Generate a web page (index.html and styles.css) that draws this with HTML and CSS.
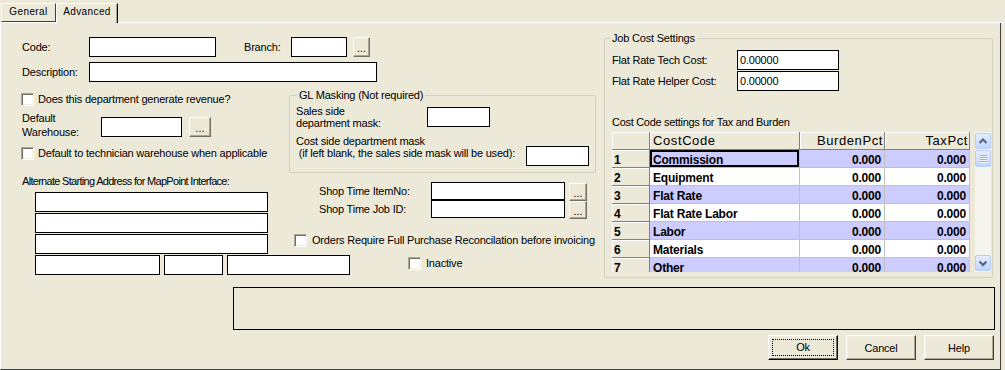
FILE: index.html
```html
<!DOCTYPE html>
<html lang="en">
<head>
    <meta charset="UTF-8">
    <meta name="viewport" content="width=device-width, initial-scale=1.0">
    <title>Department - Advanced</title>
    <link rel="stylesheet" href="styles.css">
</head>
<body>
<div class="window">
    <div class="tabs">
        <div class="tab tab-general">General</div>
        <div class="tab tab-advanced">Advanced</div>
    </div>

    <div class="panel">
        <div class="main">
            <div class="left">
                <div class="row">
                    <label class="lbl lbl-first">Code:</label>
                    <input type="text" class="txt code-input">
                    <label class="lbl branch-lbl">Branch:</label>
                    <input type="text" class="txt branch-input">
                    <button class="dots">...</button>
                </div>
                <div class="row row-desc">
                    <label class="lbl lbl-first">Description:</label>
                    <input type="text" class="txt desc-input">
                </div>

                <div class="cols">
                    <div class="col-a">
                        <label class="check check-revenue"><span class="box"></span>Does this department generate revenue?</label>
                        <div class="warehouse">
                            <label class="wh-lbl">Default<br>Warehouse:</label>
                            <input type="text" class="txt wh-input">
                            <button class="dots wh-dots">...</button>
                        </div>
                        <label class="check check-tech"><span class="box"></span>Default to technician warehouse when applicable</label>
                        <div class="alt-lbl">Alternate Starting Address for MapPoint Interface:</div>
                        <div class="address">
                            <input type="text" class="txt addr">
                            <input type="text" class="txt addr">
                            <input type="text" class="txt addr">
                            <div class="addr-row">
                                <input type="text" class="txt city">
                                <input type="text" class="txt state">
                                <input type="text" class="txt zip">
                            </div>
                        </div>
                    </div>

                    <div class="col-b">
                        <fieldset class="group gl">
                            <legend>GL Masking (Not required)</legend>
                            <div class="gl-row">
                                <label class="gl-lbl sales-lbl">Sales side<br>department mask:</label>
                                <input type="text" class="txt mask sales-mask">
                            </div>
                            <div class="gl-row cost-row">
                                <label class="gl-lbl cost-lbl">Cost side department mask<br>&nbsp;(if left blank, the sales side mask will be used):</label>
                                <input type="text" class="txt mask cost-mask">
                            </div>
                        </fieldset>

                        <div class="shop">
                            <div class="shop-row">
                                <label class="shop-lbl">Shop Time ItemNo:</label>
                                <input type="text" class="txt shop-input">
                                <button class="dots shop-dots">...</button>
                            </div>
                            <div class="shop-row">
                                <label class="shop-lbl">Shop Time Job ID:</label>
                                <input type="text" class="txt shop-input">
                                <button class="dots shop-dots">...</button>
                            </div>
                        </div>

                        <label class="check check-orders"><span class="box"></span>Orders Require Full Purchase Reconcilation before invoicing</label>
                        <label class="check check-inactive"><span class="box"></span>Inactive</label>
                    </div>
                </div>
            </div>

            <fieldset class="group jobcost">
                <legend>Job Cost Settings</legend>
                <div class="rate-row">
                    <label class="rate-lbl">Flat Rate Tech Cost:</label>
                    <input type="text" class="txt rate-input" value="0.00000">
                </div>
                <div class="rate-row">
                    <label class="rate-lbl">Flat Rate Helper Cost:</label>
                    <input type="text" class="txt rate-input" value="0.00000">
                </div>
                <div class="cc-lbl">Cost Code settings for Tax and Burden</div>

                <div class="grid">
                    <div class="cells">
                        <div class="hc"></div>
                        <div class="hc">CostCode</div>
                        <div class="hc num">BurdenPct</div>
                        <div class="hc num">TaxPct</div>

                        <div class="rh">1</div>
                        <div class="c lav focus">Commission</div>
                        <div class="c lav num">0.000</div>
                        <div class="c lav num">0.000</div>

                        <div class="rh">2</div>
                        <div class="c">Equipment</div>
                        <div class="c num">0.000</div>
                        <div class="c num">0.000</div>

                        <div class="rh">3</div>
                        <div class="c lav">Flat Rate</div>
                        <div class="c lav num">0.000</div>
                        <div class="c lav num">0.000</div>

                        <div class="rh">4</div>
                        <div class="c">Flat Rate Labor</div>
                        <div class="c num">0.000</div>
                        <div class="c num">0.000</div>

                        <div class="rh">5</div>
                        <div class="c lav">Labor</div>
                        <div class="c lav num">0.000</div>
                        <div class="c lav num">0.000</div>

                        <div class="rh">6</div>
                        <div class="c">Materials</div>
                        <div class="c num">0.000</div>
                        <div class="c num">0.000</div>

                        <div class="rh">7</div>
                        <div class="c lav">Other</div>
                        <div class="c lav num">0.000</div>
                        <div class="c lav num">0.000</div>
                    </div>

                    <div class="vscroll">
                        <div class="sb-btn">
                            <svg width="14" height="14" viewBox="0 0 14 14"><path d="M3.5 9 L7 5.5 L10.5 9" fill="none" stroke="#4D6185" stroke-width="2"/></svg>
                        </div>
                        <div class="sb-thumb">
                            <span></span><span></span><span></span><span></span>
                        </div>
                        <div class="sb-track"></div>
                        <div class="sb-btn">
                            <svg width="14" height="14" viewBox="0 0 14 14"><path d="M3.5 5.5 L7 9 L10.5 5.5" fill="none" stroke="#4D6185" stroke-width="2"/></svg>
                        </div>
                    </div>
                </div>
            </fieldset>
        </div>

        <div class="status"></div>

        <div class="actions">
            <button class="btn btn-default"><span class="focus-rect">Ok</span></button>
            <button class="btn">Cancel</button>
            <button class="btn">Help</button>
        </div>
    </div>
</div>
</body>
</html>
```

FILE: styles.css
```css
* {
    box-sizing: border-box;
}
body {
    margin: 0;
    background: #ece9d8;
}
.window {
    width: 1005px;
    height: 370px;
    overflow: hidden;
    background: #ece9d8;
    font-family: "Liberation Sans", Arial, sans-serif;
    font-size: 11px;
    letter-spacing: -0.2px;
    color: #000;
}

/* tabs */
.tabs {
    display: flex;
    height: 23px;
    box-shadow: inset 0 -1px #fff;
}
.tab {
    margin-top: 3px;
    text-align: center;
    font-size: 10px;
    letter-spacing: 0.4px;
    line-height: 16px;
}
.tab-general {
    width: 55px;
    height: 19px;
    margin-left: 1px;
    border-top: 1px solid #fff;
    border-left: 1px solid #fff;
    border-right: 1px solid #404040;
    border-bottom: 1px solid #404040;
}
.tab-advanced {
    width: 62px;
    height: 20px;
    background: #ece9d8;
    border-top: 1px solid #fff;
    border-left: 1px solid #fff;
    border-right: 1px solid #000;
    box-shadow: inset -1px 0 #aca899;
}

.panel {
    width: 1001px;
    height: 347px;
    border-left: 1px solid #fff;
    border-right: 1px solid #404040;
    border-bottom: 1px solid #404040;
}
.main {
    display: flex;
    align-items: flex-start;
}
.left {
    width: 603px;
    flex: none;
    padding: 14px 0 0 21px;
}

/* common controls */
label {
    white-space: nowrap;
}
.txt {
    height: 20px;
    margin: 0;
    padding: 0 2px;
    border: 1px solid #000;
    background: #fff;
    font: inherit;
    letter-spacing: inherit;
    flex: none;
    outline: none;
}
.dots {
    width: 17px;
    height: 20px;
    margin: 0 0 0 6px;
    padding: 0 0 2px;
    flex: none;
    background: #ece9d8;
    border: 1px solid;
    border-color: #fff #716f64 #716f64 #fff;
    box-shadow: inset -1px -1px #aca899;
    font: 11px "Liberation Sans", Arial, sans-serif;
    line-height: 20px;
    letter-spacing: 0;
    color: #000;
}
.check {
    display: flex;
    align-items: center;
    height: 13px;
    line-height: 13px;
}
.box {
    width: 13px;
    height: 13px;
    margin-right: 4px;
    flex: none;
    background: #fff;
    border: 1px solid;
    border-color: #aca899 #fff #fff #aca899;
    box-shadow: inset 1px 1px #716f64, inset -1px -1px #f1efe2;
}

.row {
    display: flex;
    align-items: flex-start;
}
.lbl {
    line-height: 20px;
}
.lbl-first {
    width: 67px;
}
.code-input {
    width: 127px;
}
.branch-lbl {
    width: 47px;
    margin-left: 28px;
}
.branch-input {
    width: 56px;
}
.row-desc {
    margin-top: 5px;
}
.desc-input {
    width: 288px;
}

.cols {
    display: flex;
    margin-top: 6px;
}
.col-a {
    width: 266px;
    flex: none;
}
.col-b {
    width: 310px;
    flex: none;
}

.check-revenue {
    margin: 5px 0 0 -1px;
}
.warehouse {
    display: flex;
    align-items: flex-start;
    margin-top: 5px;
}
.wh-lbl {
    width: 79px;
    line-height: 14px;
}
.wh-input {
    width: 81px;
    margin-top: 6px;
}
.wh-dots {
    width: 22px;
    margin: 6px 0 0 7px;
}
.check-tech {
    margin: 8px 0 0 -1px;
}
.alt-lbl {
    margin-top: 14px;
    line-height: 14px;
    letter-spacing: -0.7px;
}
.address {
    display: flex;
    flex-direction: column;
    gap: 1px;
    margin: 4px 0 0 13px;
}
.addr {
    width: 233px;
}
.addr-row {
    display: flex;
    gap: 4px;
}
.city {
    width: 125px;
}
.state {
    width: 59px;
}
.zip {
    width: 123px;
}

/* group boxes */
.group {
    margin: 0;
    min-width: 0;
    border: 1px solid #d0d0bf;
    border-radius: 2px;
}
.group legend {
    padding: 0 2px;
    line-height: 14px;
}
.gl {
    width: 307px;
    margin-left: 1px;
    padding: 3px 6px 6px;
}
.gl legend {
    margin-left: 1px;
}
.gl-row {
    display: flex;
    align-items: flex-start;
}
.gl-lbl {
    line-height: 12px;
}
.sales-lbl {
    width: 131px;
}
.cost-lbl {
    width: 230px;
}
.mask {
    width: 63px;
}
.sales-mask {
    margin-top: 2px;
}
.cost-row {
    margin-top: 6px;
}
.cost-mask {
    margin-top: 11px;
}

.shop {
    margin: 9px 0 0 31px;
}
.shop-row {
    display: flex;
    align-items: center;
    height: 18px;
}
.shop-lbl {
    width: 112px;
}
.shop-input {
    width: 134px;
    height: 18px;
}
.shop-dots {
    width: 18px;
    height: 18px;
    margin: 1px 0 0 4px;
    align-self: flex-start;
    line-height: 18px;
}
.check-orders {
    margin: 16px 0 0 6px;
}
.check-orders .box {
    margin-right: 5px;
}
.check-inactive {
    margin: 10px 0 0 120px;
}
.check-inactive .box {
    margin-right: 5px;
}

/* job cost */
.jobcost {
    width: 389px;
    flex: none;
    margin-top: 8px;
    padding: 5px 0 5px 7px;
}
.jobcost legend {
    margin-left: -2px;
}
.rate-row {
    display: flex;
    align-items: center;
    height: 20px;
}
.rate-row + .rate-row {
    margin-top: 1px;
}
.rate-lbl {
    width: 125px;
}
.rate-input {
    width: 102px;
}
.cc-lbl {
    margin-top: 24px;
    line-height: 14px;
    letter-spacing: -0.3px;
}

.grid {
    display: flex;
    height: 140px;
    margin-top: 3px;
}
.cells {
    width: 358px;
    height: 140px;
    overflow: hidden;
    display: grid;
    grid-template-columns: 38px 150px 85px 85px;
    grid-auto-rows: 18px;
    align-content: start;
}
.hc {
    padding: 2px 2px 0 3px;
    background: #ece9d8;
    border-right: 1px solid #808080;
    border-bottom: 1px solid #808080;
    box-shadow: inset 1px 1px #fff;
    font-size: 13px;
    line-height: 13px;
    letter-spacing: 0.6px;
}
.hc.num {
    padding-right: 1px;
}
.rh {
    padding: 4px 0 0 2px;
    background: #ece9d8;
    border-right: 1px solid #808080;
    border-bottom: 1px solid #808080;
    box-shadow: inset 1px 1px #fff;
    font-size: 12px;
    font-weight: bold;
    line-height: 13px;
}
.c {
    padding: 4px 3px 0;
    background: #fff;
    border-right: 1px solid #c0c0c0;
    border-bottom: 1px solid #c0c0c0;
    font-size: 12px;
    font-weight: bold;
    line-height: 13px;
    letter-spacing: -0.2px;
    white-space: nowrap;
    overflow: hidden;
}
.c.lav {
    background: #ccccff;
}
.c.focus {
    box-shadow: inset 0 0 0 2px #000;
}
.num {
    text-align: right;
}

.vscroll {
    width: 16px;
    height: 140px;
    margin-left: 5px;
    display: flex;
    flex-direction: column;
    background: #f5f4ef;
    padding: 1px 0;
}
.sb-btn,
.sb-thumb {
    height: 16px;
    flex: none;
    border: 1px solid #b8cdf7;
    border-radius: 2px;
    background: linear-gradient(#e4ecfe, #c3d4fb);
    display: flex;
    align-items: center;
    justify-content: center;
}
.sb-thumb {
    height: 17px;
    margin-top: 1px;
    flex-direction: column;
    gap: 1px;
}
.sb-thumb span {
    width: 7px;
    height: 1px;
    background: #8cb0f8;
    box-shadow: 0 1px #eef4fe;
}
.sb-track {
    flex: 1;
}

/* bottom */
.status {
    width: 762px;
    height: 43px;
    margin: 9px 0 0 232px;
    border: 1px solid #000;
}
.actions {
    display: flex;
    justify-content: flex-end;
    gap: 8px;
    margin-top: 5px;
    padding-right: 6px;
}
.btn {
    width: 70px;
    height: 25px;
    padding: 0;
    background: #ece9d8;
    border: 1px solid;
    border-color: #fff #404040 #404040 #fff;
    box-shadow: inset -1px -1px #aca899, inset 1px 1px #f1efe2;
    font: 11px "Liberation Sans", Arial, sans-serif;
    letter-spacing: -0.2px;
    color: #000;
}
.btn-default {
    border-color: #fff #000 #000 #fff;
    box-shadow: inset -1px -1px #716f64, inset 1px 1px #f1efe2;
}
.focus-rect {
    display: block;
    margin: 0 3px;
    height: 17px;
    line-height: 15px;
    border: 1px dotted #000;
}
```
